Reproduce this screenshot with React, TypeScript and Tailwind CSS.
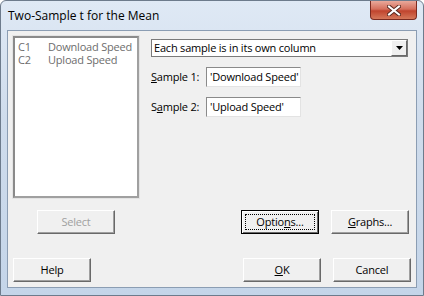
import React from "react";

const ui = { fontFamily: '"Open Sans", "Noto Sans", sans-serif' };

function Btn({ children, disabled, focused, className = "" }: { children: React.ReactNode; disabled?: boolean; focused?: boolean; className?: string }) {
  return (
    <div
      className={`relative h-[24px] w-[78px] flex items-center justify-center text-[11px] tracking-[-0.2px] bg-[#f0f0f0] ${
        focused
          ? "border border-black shadow-[inset_1px_1px_0_#fff,inset_-1px_-1px_0_#696969]"
          : "border border-t-white border-l-white border-r-[#696969] border-b-[#696969] shadow-[inset_-1px_-1px_0_#a0a0a0]"
      } ${disabled ? "text-[#a0a0a0]" : "text-black"} ${className}`}
    >
      {children}
      {focused && <span className="absolute inset-[3px] border border-dotted border-black" />}
    </div>
  );
}

export default function App() {
  return (
    <div
      style={ui}
      className="w-[424px] h-[296px] flex flex-col border border-[#6d7b8c] rounded-t-[6px] bg-[linear-gradient(180deg,#dfe9f5_0%,#cfdcec_40%,#c4d5e9_100%)] overflow-hidden"
    >
      {/* title bar */}
      <div className="h-[29px] flex items-start shrink-0">
        <div className="pl-[7px] pt-[6px] text-[12px] text-black">Two-Sample t for the Mean</div>
        <div className="ml-auto mr-[6px] w-[47px] h-[19px] rounded-b-[4px] border border-t-0 border-[#7a2a20] bg-[linear-gradient(180deg,#e9a99b_0%,#d56f5c_45%,#c0442e_55%,#d5785a_100%)] flex items-center justify-center">
          <svg width="14" height="11" viewBox="0 0 14 11">
            <path d="M2 1.5 L12 9.5 M12 1.5 L2 9.5" stroke="#5a2a20" strokeWidth="4" strokeLinecap="square" />
            <path d="M2 1.5 L12 9.5 M12 1.5 L2 9.5" stroke="#ffffff" strokeWidth="2" strokeLinecap="square" />
          </svg>
        </div>
      </div>

      {/* client area */}
      <div className="mx-[6px] mb-[7px] flex-1 border border-[#8b9db3] bg-[#f0f0f0] flex flex-col text-[11px] tracking-[-0.2px]">
        <div className="flex pt-[5px] pl-[5px]">
          {/* left column */}
          <div className="flex flex-col">
            <div className="w-[126px] h-[162px] bg-white border-2 border-t-[#8a8a8a] border-l-[#8a8a8a] border-r-[#a0a0a0] border-b-[#a0a0a0] outline outline-1 outline-[#e3e3e3] pt-[2px] pl-[3px] text-[#6d6d6d] leading-[13px] whitespace-nowrap">
              <div className="flex">
                <span className="w-[30px]">C1</span>
                <span>Download Speed</span>
              </div>
              <div className="flex">
                <span className="w-[30px]">C2</span>
                <span>Upload Speed</span>
              </div>
            </div>
            <Btn disabled className="ml-[24px] mt-[12px]">Select</Btn>
          </div>

          {/* right column */}
          <div className="flex flex-col ml-[12px] pt-[3px]">
            <div className="w-[257px] h-[18px] bg-white border border-[#7a7a7a] flex items-center">
              <span className="pl-[2px] flex-1">Each sample is in its own column</span>
              <div className="w-[16px] h-[16px] bg-[#f0f0f0] border border-t-white border-l-white border-r-[#696969] border-b-[#696969] flex items-center justify-center">
                <svg width="7" height="4" viewBox="0 0 7 4">
                  <path d="M0 0 H7 L3.5 4 Z" fill="#000" />
                </svg>
              </div>
            </div>
            <div className="flex items-center mt-[10px] h-[20px]">
              <span className="w-[55px]">
                <span className="underline">S</span>ample 1:
              </span>
              <div className="w-[95px] h-[20px] bg-white border border-[#8a8a8a] border-r-[#e3e3e3] border-b-[#e3e3e3] flex items-center pl-[3px] whitespace-nowrap">
                'Download Speed'
              </div>
            </div>
            <div className="flex items-center mt-[10px] h-[20px]">
              <span className="w-[55px]">
                S<span className="underline">a</span>mple 2:
              </span>
              <div className="w-[95px] h-[20px] bg-white border border-[#8a8a8a] border-r-[#e3e3e3] border-b-[#e3e3e3] flex items-center pl-[3px] whitespace-nowrap">
                'Upload Speed'
              </div>
            </div>
          </div>
        </div>

        <div className="flex mt-[-24px] pl-[233px] gap-[12px]">
          <Btn focused>
            Optio<span className="underline">n</span>s...
          </Btn>
          <Btn>
            <span className="underline">G</span>raphs...
          </Btn>
        </div>

        <div className="flex mt-auto mb-[5px] pl-[5px]">
          <Btn>Help</Btn>
          <div className="ml-auto mr-[5px] flex gap-[12px]">
            <Btn>
              <span className="underline">O</span>K
            </Btn>
            <Btn>Cancel</Btn>
          </div>
        </div>
      </div>
    </div>
  );
}
